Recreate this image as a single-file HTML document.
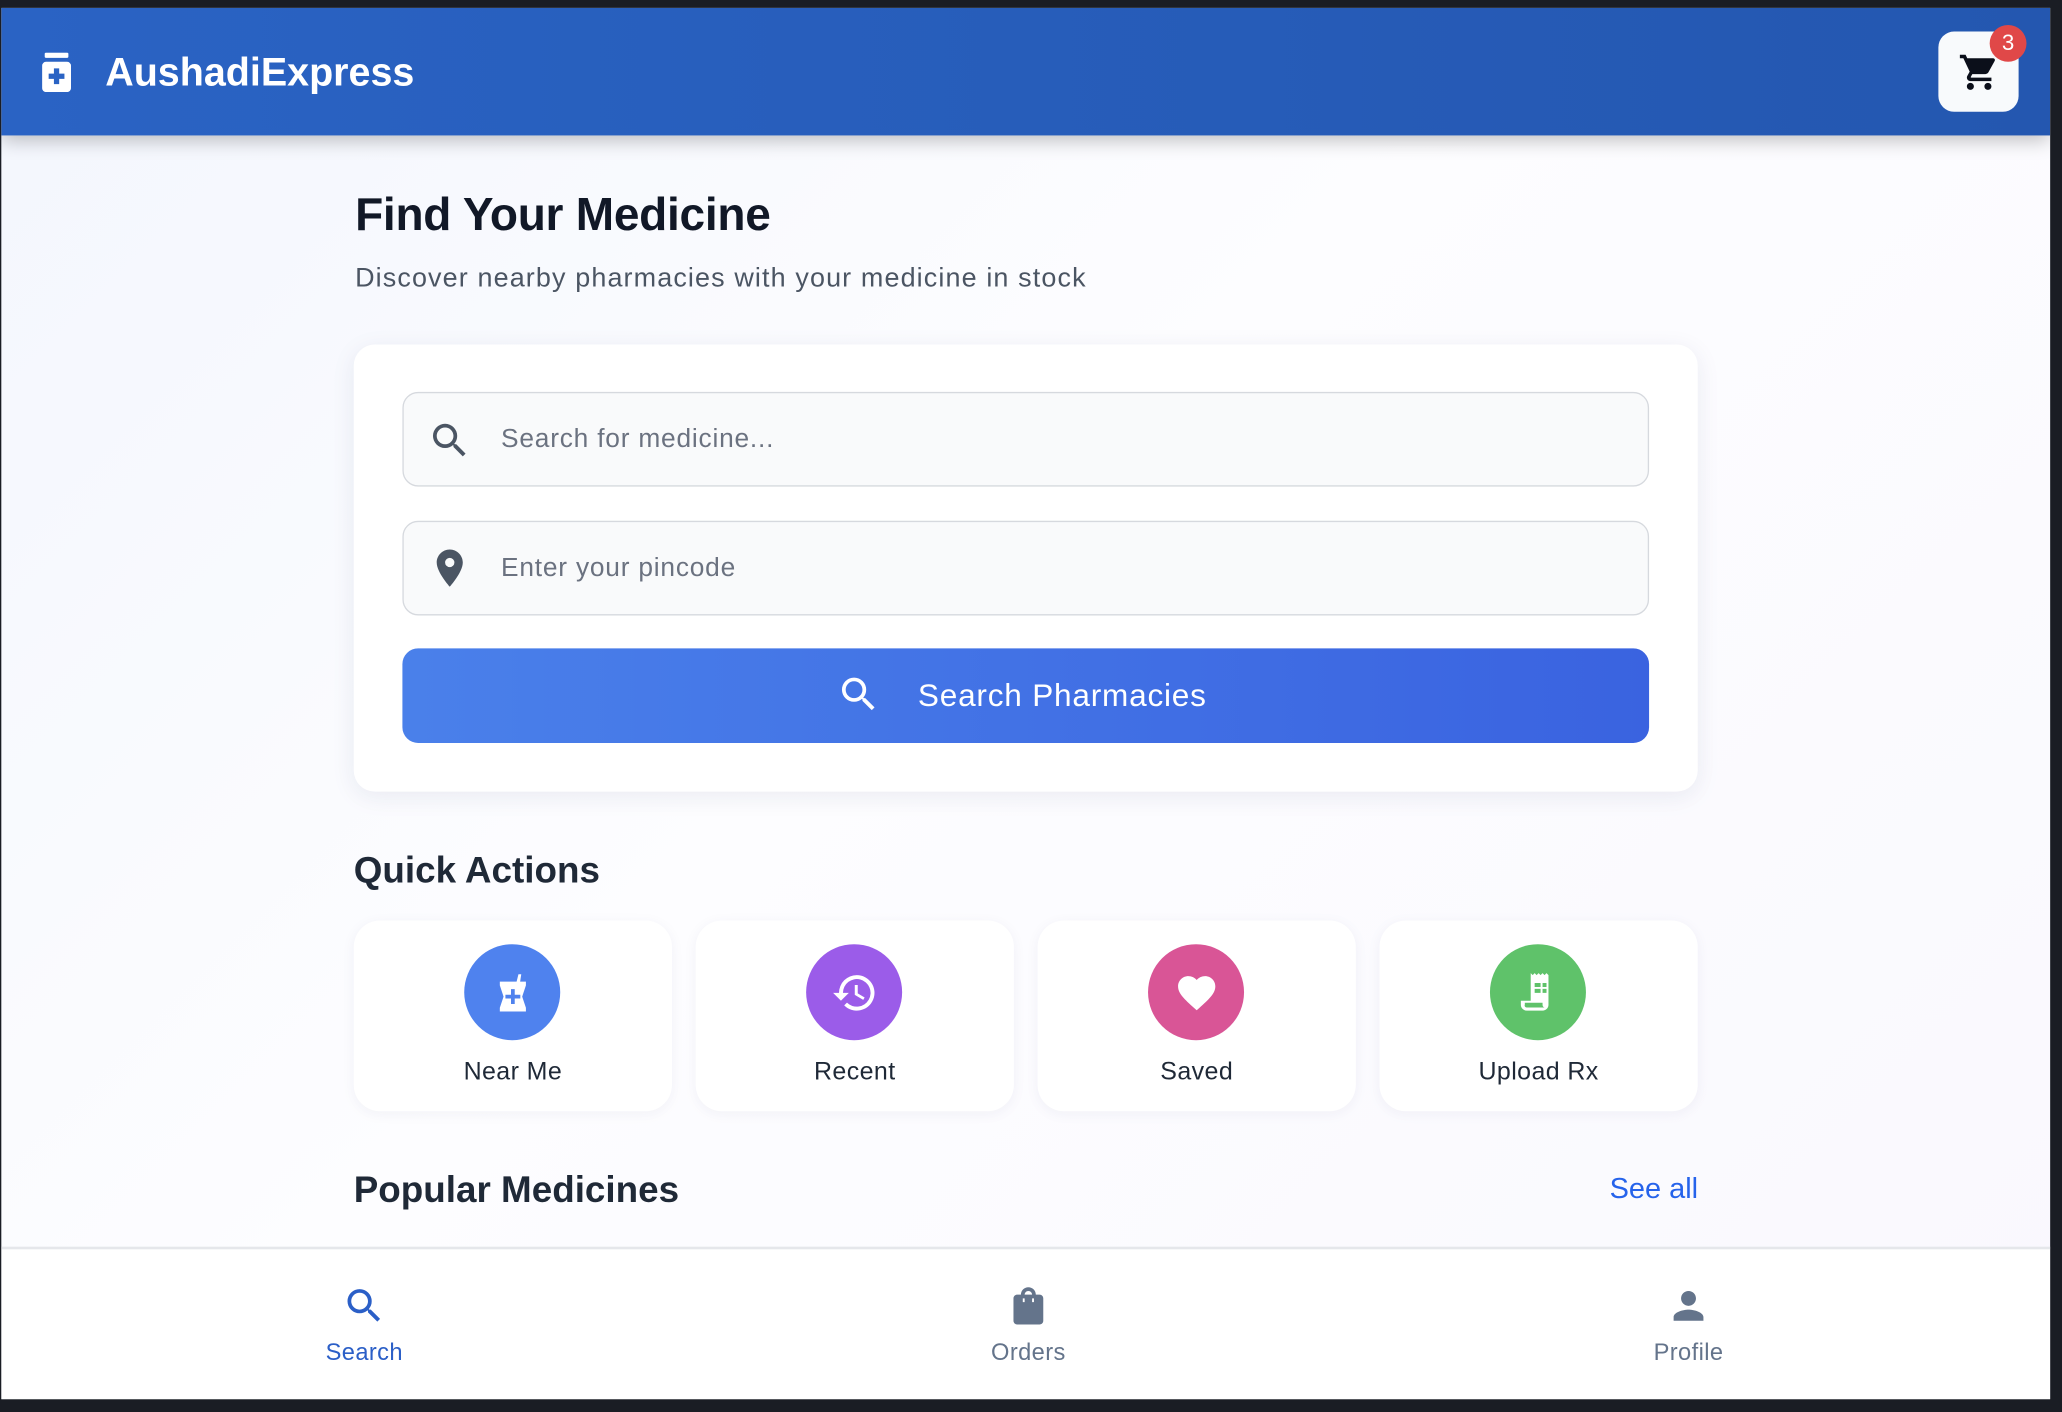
<!DOCTYPE html>
<html><head><meta charset="utf-8"><style>
*{box-sizing:border-box;margin:0;padding:0}
html,body{width:2062px;height:1412px;overflow:hidden;background:#1a1d24;font-family:"Liberation Sans",sans-serif}
#s{width:1568px;height:1074px;transform:scale(1.31505);transform-origin:0 0;position:relative;background:#1a1d24}
.app{position:absolute;left:1px;top:6px;width:1558px;height:1058px;background:linear-gradient(135deg,#f3f6fd 0%,#fdfdff 45%,#f9f8fe 100%);overflow:hidden}
.hdr{position:absolute;left:0;top:0;width:100%;height:97px;background:linear-gradient(90deg,#2a63c4,#2457b0);box-shadow:0 4px 14px rgba(0,0,0,.25);z-index:2}
.a{position:absolute}
.card{position:absolute;left:268px;top:256px;width:1022px;height:340px;background:#fff;border-radius:16px;box-shadow:0 4px 18px rgba(30,40,90,.08)}
.inp{position:absolute;left:37px;width:948px;height:72px;background:#f9fafb;border:1.5px solid #d6d9de;border-radius:12px}
.ph{position:absolute;left:74px;top:24px;font-size:20px;color:#6b7280;letter-spacing:0.6px}
.tile{position:absolute;top:694px;width:242px;height:145px;background:#fff;border-radius:20px;box-shadow:0 2px 10px rgba(30,40,90,.05)}
.circ{position:absolute;left:84px;top:18px;width:73px;height:73px;border-radius:50%;display:flex;align-items:center;justify-content:center}
.lbl{position:absolute;top:105px;width:100%;text-align:center;font-size:19px;color:#1f2937;letter-spacing:0.3px}
.nav{position:absolute;left:0;top:942px;width:100%;height:116px;background:#fff;border-top:2px solid #e5e7eb;z-index:2}
.ni{position:absolute;top:26px;width:120px;margin-left:-60px;text-align:center;font-size:18px;letter-spacing:0.3px}
</style></head><body><div id="s"><div class="app">
<div class="hdr">
<svg class="a" style="left:31px;top:34px" width="22" height="30" viewBox="0 0 22 30"><rect x="2" y="0" width="18" height="4" rx="1" fill="#fff"/><rect x="0" y="7" width="22" height="23" rx="3" fill="#fff"/><path d="M9 12h4v4h4v4h-4v4h-4v-4h-4v-4h4z" fill="#2a63c4"/></svg>
<div class="a" style="left:79px;top:33px;font-size:30px;font-weight:bold;color:#fff">AushadiExpress</div>
<div class="a" style="left:1473px;top:18px;width:61px;height:61px;background:#f8fafc;border-radius:12px"></div>
<svg class="a" style="left:1487px;top:33px" width="34" height="32" viewBox="0 0 24 24"><path fill="#0b0f1a" d="M7 18c-1.1 0-2 .9-2 2s.9 2 2 2 2-.9 2-2-.9-2-2-2zM1 2v2h2l3.6 7.590-1.35 2.45C4.52 15.37 5.48 17 7 17h12v-2H7.42c-.14 0-.25-.11-.25-.25l.03-.12.9-1.63h7.45c.75 0 1.41-.41 1.75-1.030l3.58-6.49A1 1 0 0 0 20 4H5.21l-.94-2H1zm16 16c-1.1 0-2 .9-2 2s.9 2 2 2 2-.9 2-2-.9-2-2-2z"/></svg>
<div class="a" style="left:1512px;top:13px;width:28px;height:28px;border-radius:50%;background:#e04848;color:#fff;font-size:17px;text-align:center;line-height:28px">3</div>
</div>
<div class="a" style="left:269px;top:138px;font-size:35px;font-weight:600;color:#111827;letter-spacing:-0.2px">Find Your Medicine</div>
<div class="a" style="left:269px;top:194px;font-size:20.5px;color:#4b5563;letter-spacing:0.85px">Discover nearby pharmacies with your medicine in stock</div>
<div class="card">
<div class="inp" style="top:36px"><svg class="a" style="left:18px;top:19px" width="34" height="34" viewBox="0 0 24 24"><path fill="#4b5563" d="M15.5 14h-.79l-.28-.27A6.47 6.47 0 0 0 16 9.5 6.5 6.5 0 1 0 9.5 16c1.61 0 3.09-.59 4.23-1.57l.27.28v.79l5 4.99L20.49 19l-4.99-5zm-6 0C7.01 14 5 11.99 5 9.5S7.01 5 9.5 5 14 7.01 14 9.5 11.99 14 9.5 14z"/></svg><div class="ph">Search for medicine...</div></div>
<div class="inp" style="top:134px"><svg class="a" style="left:18px;top:18px" width="34" height="34" viewBox="0 0 24 24"><path fill="#4b5563" d="M12 2C8.13 2 5 5.13 5 9c0 5.25 7 13 7 13s7-7.75 7-13c0-3.87-3.13-7-7-7zm0 9.5a2.5 2.5 0 1 1 0-5 2.5 2.5 0 0 1 0 5z"/></svg><div class="ph">Enter your pincode</div></div>
<div class="a" style="left:37px;top:231px;width:948px;height:72px;border-radius:12px;background:linear-gradient(90deg,#4a80ea,#3a63e0)">
<svg class="a" style="left:330px;top:18px" width="34" height="34" viewBox="0 0 24 24"><path fill="#fff" d="M15.5 14h-.79l-.28-.27A6.47 6.47 0 0 0 16 9.5 6.5 6.5 0 1 0 9.5 16c1.61 0 3.09-.59 4.23-1.57l.27.28v.79l5 4.99L20.49 19l-4.99-5zm-6 0C7.01 14 5 11.99 5 9.5S7.01 5 9.5 5 14 7.01 14 9.5 11.99 14 9.5 14z"/></svg>
<div class="a" style="left:392px;top:23px;font-size:24px;color:#fff;letter-spacing:0.6px">Search Pharmacies</div></div>
</div>
<div class="a" style="left:268px;top:640px;font-size:28px;font-weight:600;color:#1f2937">Quick Actions</div>
<div class="tile" style="left:268px"><div class="circ" style="background:#4f82ee"><svg width="34" height="34" viewBox="0 0 24 24"><path fill="#fff" d="M5 6h9l1-4h1.5l-.6 4H19v2l-2 6 2 6v2H5v-2l2-6-2-6z"/><path fill="#4f82ee" d="M11 10h2v3h3v2h-3v3h-2v-3H8v-2h3z"/></svg></div><div class="lbl">Near Me</div></div>
<div class="tile" style="left:528px"><div class="circ" style="background:#9b5ce9"><svg width="36" height="36" viewBox="0 0 24 24"><path fill="#fff" d="M13 3a9 9 0 0 0-9 9H1l3.89 3.89.07.14L9 12H6a7 7 0 1 1 2.05 4.95l-1.42 1.42A9 9 0 1 0 13 3zm-1 5v5l4.28 2.54.72-1.21-3.5-2.08V8H12z"/></svg></div><div class="lbl">Recent</div></div>
<div class="tile" style="left:788px"><div class="circ" style="background:#d95596"><svg width="34" height="34" viewBox="0 0 24 24"><path fill="#fff" d="M12 21.35l-1.45-1.32C5.4 15.36 2 12.28 2 8.5 2 5.42 4.420 3 7.5 3c1.74 0 3.41.81 4.5 2.09C13.09 3.81 14.76 3 16.5 3 19.58 3 22 5.42 22 8.5c0 3.78-3.4 6.86-8.55 11.54L12 21.35z"/></svg></div><div class="lbl">Saved</div></div>
<div class="tile" style="left:1048px"><div class="circ" style="background:#5fc26a"><svg width="36" height="36" viewBox="0 0 24 24"><path fill="#fff" d="M8 2l1 1 1-1 1 1 1-1 1 1 1-1 1 1 1-1 1 1v15a3 3 0 0 1-3 3H6a3 3 0 0 1-3-3v-2h5z"/><path fill="#5fc26a" d="M10 7h3v2h-3zm4 0h2v2h-2zm-4 3h3v2h-3zm4 0h2v2h-2zM5 17h9v1a1.5 1.5 0 0 0 1 1.4H6A1 1 0 0 1 5 18z"/></svg></div><div class="lbl">Upload Rx</div></div>
<div class="a" style="left:268px;top:883px;font-size:28px;font-weight:600;color:#1f2937">Popular Medicines</div>
<div class="a" style="left:1223px;top:885px;font-size:22px;color:#2563eb">See all</div>
<div class="nav">
<div class="ni" style="left:276px;color:#2b5fc7"><svg width="34" height="34" viewBox="0 0 24 24"><path fill="#2b5fc7" d="M15.5 14h-.79l-.28-.27A6.47 6.47 0 0 0 16 9.5 6.5 6.5 0 1 0 9.5 16c1.61 0 3.09-.59 4.23-1.57l.27.28v.79l5 4.99L20.49 19l-4.99-5zm-6 0C7.01 14 5 11.99 5 9.5S7.01 5 9.5 5 14 7.01 14 9.5 11.99 14 9.5 14z"/></svg><div style="margin-top:3px">Search</div></div>
<div class="ni" style="left:781px;color:#64748b"><svg width="34" height="34" viewBox="0 0 24 24"><path fill="#64748b" d="M18 6h-2c0-2.21-1.79-4-4-4S8 3.79 8 6H6c-1.1 0-2 .9-2 2v12c0 1.1.9 2 2 2h12c1.1 0 2-.9 2-2V8c0-1.1-.9-2-2-2zm-8 4H9V8h1zm0-4c0-1.1.9-2 2-2s2 .9 2 2zm5 4h-1V8h1z"/></svg><div style="margin-top:3px">Orders</div></div>
<div class="ni" style="left:1283px;color:#64748b"><svg width="34" height="34" viewBox="0 0 24 24"><path fill="#64748b" d="M12 12c2.21 0 4-1.79 4-4s-1.790-4-4-4-4 1.79-4 4 1.79 4 4 4zm0 2c-2.67 0-8 1.34-8 4v2h16v-2c0-2.66-5.33-4-8-4z"/></svg><div style="margin-top:3px">Profile</div></div>
</div>
</div></div></body></html>
